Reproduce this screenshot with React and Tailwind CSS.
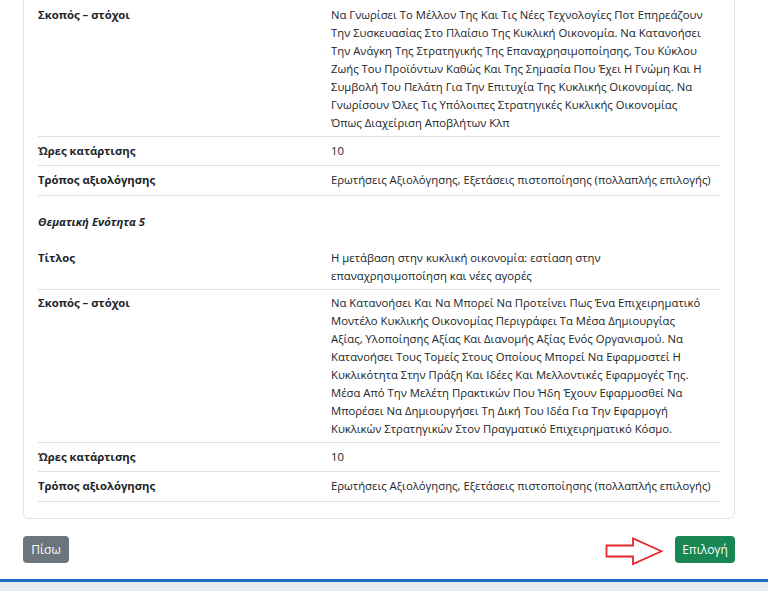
import React from "react";

const Row = ({ label, lines }) => {
  const multi = lines.length > 1;
  return (
    <div className="flex border-b border-[#dee2e6]">
      <div className={`w-[293px] shrink-0 font-bold ${multi ? "py-[4px]" : "py-[5.25px]"}`}>
        {label}
      </div>
      <div className={`flex-1 ${multi ? "py-[4px]" : "py-[5.25px]"}`}>
        {lines.map((l, i) => (
          <div key={i} className="whitespace-nowrap">
            {l}
          </div>
        ))}
      </div>
    </div>
  );
};

const App = () => {
  return (
    <div
      className="min-h-[591px] flex flex-col bg-white text-[#212529] text-[11.3px] leading-[18px]"
      style={{ fontFamily: '"Open Sans", "Noto Sans", sans-serif' }}
    >
      <div className="ml-[23px] w-[712px] border border-t-0 border-[#e3e6e9] rounded-b-md px-[14px] pt-[1.5px] pb-[16px]">
        <Row
          label="Σκοπός – στόχοι"
          lines={[
            "Να Γνωρίσει Το Μέλλον Της Και Τις Νέες Τεχνολογίες Ποτ Επηρεάζουν",
            "Την Συσκευασίας Στο Πλαίσιο Της Κυκλική Οικονομία. Να Κατανοήσει",
            "Την Ανάγκη Της Στρατηγικής Της Επαναχρησιμοποίησης, Του Κύκλου",
            "Ζωής Του Προϊόντων Καθώς Και Της Σημασία Που Έχει Η Γνώμη Και Η",
            "Συμβολή Του Πελάτη Για Την Επιτυχία Της Κυκλικής Οικονομίας. Να",
            "Γνωρίσουν Όλες Τις Υπόλοιπες Στρατηγικές Κυκλικής Οικονομίας",
            "Όπως Διαχείριση Αποβλήτων Κλπ",
          ]}
        />
        <Row label="Ώρες κατάρτισης" lines={["10"]} />
        <Row
          label="Τρόπος αξιολόγησης"
          lines={["Ερωτήσεις Αξιολόγησης, Εξετάσεις πιστοποίησης (πολλαπλής επιλογής)"]}
        />

        <div className="pt-[17px] pb-[14px] font-bold italic">Θεματική Ενότητα 5</div>

        <Row
          label="Τίτλος"
          lines={[
            "Η μετάβαση στην κυκλική οικονομία: εστίαση στην",
            "επαναχρησιμοποίηση και νέες αγορές",
          ]}
        />
        <Row
          label="Σκοπός – στόχοι"
          lines={[
            "Να Κατανοήσει Και Να Μπορεί Να Προτείνει Πως Ένα Επιχειρηματικό",
            "Μοντέλο Κυκλικής Οικονομίας Περιγράφει Τα Μέσα Δημιουργίας",
            "Αξίας, Υλοποίησης Αξίας Και Διανομής Αξίας Ενός Οργανισμού. Να",
            "Κατανοήσει Τους Τομείς Στους Οποίους Μπορεί Να Εφαρμοστεί Η",
            "Κυκλικότητα Στην Πράξη Και Ιδέες Και Μελλοντικές Εφαρμογές Της.",
            "Μέσα Από Την Μελέτη Πρακτικών Που Ήδη Έχουν Εφαρμοσθεί Να",
            "Μπορέσει Να Δημιουργήσει Τη Δική Του Ιδέα Για Την Εφαρμογή",
            "Κυκλικών Στρατηγικών Στον Πραγματικό Επιχειρηματικό Κόσμο.",
          ]}
        />
        <Row label="Ώρες κατάρτισης" lines={["10"]} />
        <Row
          label="Τρόπος αξιολόγησης"
          lines={["Ερωτήσεις Αξιολόγησης, Εξετάσεις πιστοποίησης (πολλαπλής επιλογής)"]}
        />
      </div>

      {/* nav buttons */}
      <div className="ml-[23px] w-[712px] mt-[15px] flex items-center justify-between">
        <button className="h-[27px] w-[46px] rounded bg-[#6c757d] text-white text-[12px]">
          Πίσω
        </button>
        <div className="flex items-center gap-[12px]">
          <svg width="58" height="30" viewBox="0 0 58 30" className="mt-[2px]">
            <path
              d="M1.5 9.5 H28 V2.5 L56.5 15.25 L28 28 V20.5 H1.5 Z"
              fill="white"
              stroke="#e8262b"
              strokeWidth="1.8"
            />
          </svg>
          <button className="h-[27px] w-[60px] rounded bg-[#198754] text-white text-[12px]">
            Επιλογή
          </button>
        </div>
      </div>

      <div className="mt-auto h-[3px] bg-[#1a6dc2]"></div>
      <div className="h-[9px] bg-[#e9ecef]"></div>
    </div>
  );
};

export default App;
